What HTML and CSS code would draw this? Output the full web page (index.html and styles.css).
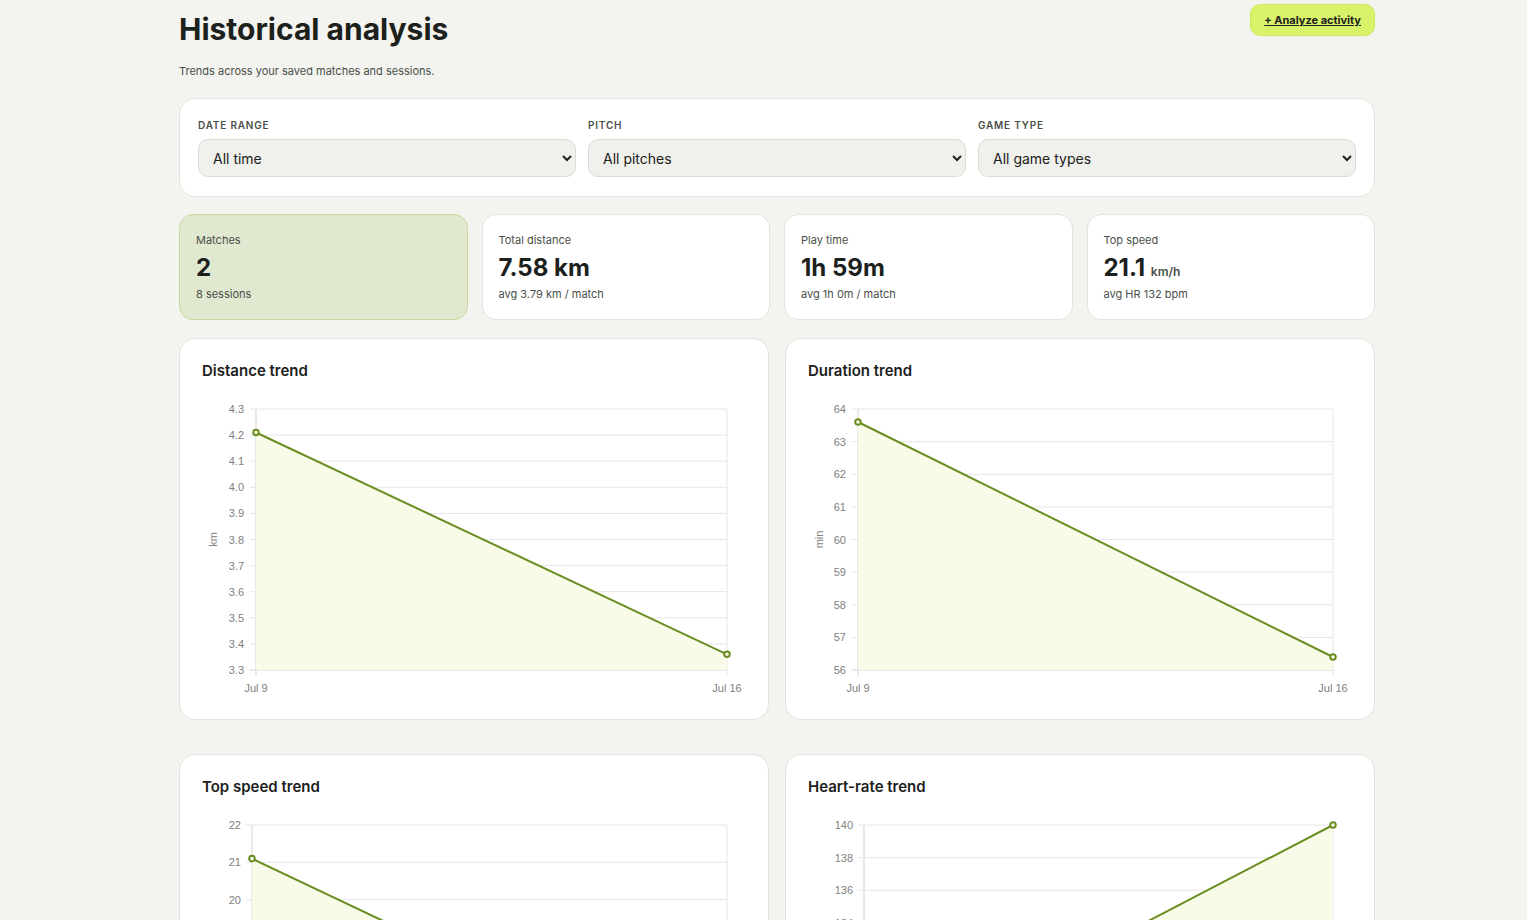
FILE: index.html
```html
<!DOCTYPE html>
<html lang="en">
<head>
  <meta charset="UTF-8">
  <meta name="viewport" content="width=device-width, initial-scale=1.0">
  <title>Historical analysis</title>
  <link rel="stylesheet" href="styles.css">
</head>
<body>

  <main class="page">
    <!-- Page header -->
    <div class="page-head">
      <div>
        <h1>Historical analysis</h1>
        <p class="subtitle">Trends across your saved matches and sessions.</p>
      </div>
      <a class="btn-primary" href="#">+ Analyze activity</a>
    </div>

    <!-- Filters -->
    <div class="card filters">
      <div class="field">
        <label>Date range</label>
        <select>
          <option>All time</option>
          <option>Last 30 days</option>
          <option>Last 90 days</option>
        </select>
      </div>
      <div class="field">
        <label>Pitch</label>
        <select>
          <option>All pitches</option>
        </select>
      </div>
      <div class="field">
        <label>Game type</label>
        <select>
          <option>All game types</option>
        </select>
      </div>
    </div>

    <!-- Summary stats -->
    <div class="stats">
      <div class="stat highlight">
        <div class="stat-label">Matches</div>
        <div class="stat-value">2</div>
        <div class="stat-sub">8 sessions</div>
      </div>
      <div class="stat">
        <div class="stat-label">Total distance</div>
        <div class="stat-value">7.58 km</div>
        <div class="stat-sub">avg 3.79 km / match</div>
      </div>
      <div class="stat">
        <div class="stat-label">Play time</div>
        <div class="stat-value">1h 59m</div>
        <div class="stat-sub">avg 1h 0m / match</div>
      </div>
      <div class="stat">
        <div class="stat-label">Top speed</div>
        <div class="stat-value">21.1 <span class="unit">km/h</span></div>
        <div class="stat-sub">avg HR 132 bpm</div>
      </div>
    </div>

    <!-- Trend charts -->
    <div class="charts">
      <div class="card chart-card">
        <h3>Distance trend</h3>
        <svg class="chart" width="546" height="310" viewBox="0 0 546 310">
          <g class="grid">
            <line x1="49" y1="14" x2="526" y2="14"/>
            <line x1="49" y1="40.1" x2="526" y2="40.1"/>
            <line x1="49" y1="66.2" x2="526" y2="66.2"/>
            <line x1="49" y1="92.3" x2="526" y2="92.3"/>
            <line x1="49" y1="118.4" x2="526" y2="118.4"/>
            <line x1="49" y1="144.5" x2="526" y2="144.5"/>
            <line x1="49" y1="170.6" x2="526" y2="170.6"/>
            <line x1="49" y1="196.7" x2="526" y2="196.7"/>
            <line x1="49" y1="222.8" x2="526" y2="222.8"/>
            <line x1="49" y1="248.9" x2="526" y2="248.9"/>
            <line x1="526" y1="14" x2="526" y2="281"/>
          </g>
          <g class="axis">
            <line x1="55" y1="14" x2="55" y2="281"/>
            <line x1="49" y1="275" x2="526" y2="275"/>
          </g>
          <g class="ticks" text-anchor="end">
            <text x="43" y="18">4.3</text>
            <text x="43" y="44.1">4.2</text>
            <text x="43" y="70.2">4.1</text>
            <text x="43" y="96.3">4.0</text>
            <text x="43" y="122.4">3.9</text>
            <text x="43" y="148.5">3.8</text>
            <text x="43" y="174.6">3.7</text>
            <text x="43" y="200.7">3.6</text>
            <text x="43" y="226.8">3.5</text>
            <text x="43" y="252.9">3.4</text>
            <text x="43" y="279">3.3</text>
          </g>
          <g class="ticks" text-anchor="middle">
            <text x="55" y="297">Jul 9</text>
            <text x="526" y="297">Jul 16</text>
          </g>
          <text class="unit-label" transform="translate(16 144.5) rotate(-90)" text-anchor="middle">km</text>
          <polygon class="area" points="55,37.5 526,259.3 526,275 55,275"/>
          <polyline class="line" points="55,37.5 526,259.3"/>
          <circle class="dot" cx="55" cy="37.5" r="2.8"/>
          <circle class="dot" cx="526" cy="259.3" r="2.8"/>
        </svg>
      </div>

      <div class="card chart-card">
        <h3>Duration trend</h3>
        <svg class="chart" width="546" height="310" viewBox="0 0 546 310">
          <g class="grid">
            <line x1="45" y1="14" x2="526" y2="14"/>
            <line x1="45" y1="46.6" x2="526" y2="46.6"/>
            <line x1="45" y1="79.3" x2="526" y2="79.3"/>
            <line x1="45" y1="111.9" x2="526" y2="111.9"/>
            <line x1="45" y1="144.5" x2="526" y2="144.5"/>
            <line x1="45" y1="177.1" x2="526" y2="177.1"/>
            <line x1="45" y1="209.8" x2="526" y2="209.8"/>
            <line x1="45" y1="242.4" x2="526" y2="242.4"/>
            <line x1="526" y1="14" x2="526" y2="281"/>
          </g>
          <g class="axis">
            <line x1="51" y1="14" x2="51" y2="281"/>
            <line x1="45" y1="275" x2="526" y2="275"/>
          </g>
          <g class="ticks" text-anchor="end">
            <text x="39" y="18">64</text>
            <text x="39" y="50.6">63</text>
            <text x="39" y="83.3">62</text>
            <text x="39" y="115.9">61</text>
            <text x="39" y="148.5">60</text>
            <text x="39" y="181.1">59</text>
            <text x="39" y="213.8">58</text>
            <text x="39" y="246.4">57</text>
            <text x="39" y="279">56</text>
          </g>
          <g class="ticks" text-anchor="middle">
            <text x="51" y="297">Jul 9</text>
            <text x="526" y="297">Jul 16</text>
          </g>
          <text class="unit-label" transform="translate(16 144.5) rotate(-90)" text-anchor="middle">min</text>
          <polygon class="area" points="51,27 526,262 526,275 51,275"/>
          <polyline class="line" points="51,27 526,262"/>
          <circle class="dot" cx="51" cy="27" r="2.8"/>
          <circle class="dot" cx="526" cy="262" r="2.8"/>
        </svg>
      </div>

      <div class="card chart-card">
        <h3>Top speed trend</h3>
        <svg class="chart" width="546" height="310" viewBox="0 0 546 310">
          <g class="grid">
            <line x1="45" y1="14" x2="526" y2="14"/>
            <line x1="45" y1="51.3" x2="526" y2="51.3"/>
            <line x1="45" y1="88.6" x2="526" y2="88.6"/>
            <line x1="45" y1="125.9" x2="526" y2="125.9"/>
            <line x1="45" y1="163.1" x2="526" y2="163.1"/>
            <line x1="45" y1="200.4" x2="526" y2="200.4"/>
            <line x1="45" y1="237.7" x2="526" y2="237.7"/>
            <line x1="526" y1="14" x2="526" y2="281"/>
          </g>
          <g class="axis">
            <line x1="51" y1="14" x2="51" y2="281"/>
            <line x1="45" y1="275" x2="526" y2="275"/>
          </g>
          <g class="ticks" text-anchor="end">
            <text x="40" y="18">22</text>
            <text x="40" y="55.3">21</text>
            <text x="40" y="92.6">20</text>
            <text x="40" y="129.9">19</text>
            <text x="40" y="167.1">18</text>
            <text x="40" y="204.4">17</text>
            <text x="40" y="241.7">16</text>
            <text x="40" y="279">15</text>
          </g>
          <g class="ticks" text-anchor="middle">
            <text x="51" y="297">Jul 9</text>
            <text x="526" y="297">Jul 16</text>
          </g>
          <text class="unit-label" transform="translate(16 144.5) rotate(-90)" text-anchor="middle">km/h</text>
          <polygon class="area" points="51,47.6 526,273 526,275 51,275"/>
          <polyline class="line" points="51,47.6 526,273"/>
          <circle class="dot" cx="51" cy="47.6" r="2.8"/>
          <circle class="dot" cx="526" cy="273" r="2.8"/>
        </svg>
      </div>

      <div class="card chart-card">
        <h3>Heart-rate trend</h3>
        <svg class="chart" width="546" height="310" viewBox="0 0 546 310">
          <g class="grid">
            <line x1="51" y1="14" x2="526" y2="14"/>
            <line x1="51" y1="46.6" x2="526" y2="46.6"/>
            <line x1="51" y1="79.3" x2="526" y2="79.3"/>
            <line x1="51" y1="111.9" x2="526" y2="111.9"/>
            <line x1="51" y1="144.5" x2="526" y2="144.5"/>
            <line x1="51" y1="177.1" x2="526" y2="177.1"/>
            <line x1="51" y1="209.8" x2="526" y2="209.8"/>
            <line x1="51" y1="242.4" x2="526" y2="242.4"/>
            <line x1="526" y1="14" x2="526" y2="281"/>
          </g>
          <g class="axis">
            <line x1="57" y1="14" x2="57" y2="281"/>
            <line x1="51" y1="275" x2="526" y2="275"/>
          </g>
          <g class="ticks" text-anchor="end">
            <text x="46" y="18">140</text>
            <text x="46" y="50.6">138</text>
            <text x="46" y="83.3">136</text>
            <text x="46" y="115.9">134</text>
            <text x="46" y="148.5">132</text>
            <text x="46" y="181.1">130</text>
            <text x="46" y="213.8">128</text>
            <text x="46" y="246.4">126</text>
            <text x="46" y="279">124</text>
          </g>
          <g class="ticks" text-anchor="middle">
            <text x="57" y="297">Jul 9</text>
            <text x="526" y="297">Jul 16</text>
          </g>
          <text class="unit-label" transform="translate(16 144.5) rotate(-90)" text-anchor="middle">bpm</text>
          <polygon class="area" points="57,258 526,14 526,275 57,275"/>
          <polyline class="line" points="57,258 526,14"/>
          <circle class="dot" cx="57" cy="258" r="2.8"/>
          <circle class="dot" cx="526" cy="14" r="2.8"/>
        </svg>
      </div>
    </div>
  </main>

</body>
</html>
```

FILE: styles.css
```css
/* Base */
body, html {
  margin: 0;
  padding: 0;
  font-family: Inter, "Noto Sans", sans-serif;
  background-color: #f3f3ef;
  color: #1c211c;
}

.page {
  width: 1196px;
  margin: 0 0 0 179px;
  padding-bottom: 40px;
}

/* Header */
.page-head {
  display: flex;
  justify-content: space-between;
  align-items: flex-start;
}
.page-head h1 {
  margin: 11px 0 0;
  font-size: 30px;
  font-weight: 700;
  letter-spacing: 0;
  line-height: 36px;
}
.subtitle {
  margin: 17px 0 0;
  font-size: 11px;
  color: #4a4f4a;
}
.btn-primary {
  margin-top: 4px;
  height: 32px;
  padding: 0 13px;
  display: flex;
  align-items: center;
  background-color: #d8f26a;
  border: 1px solid #cfe95f;
  border-radius: 10px;
  color: #1c211c;
  font-size: 11px;
  font-weight: 700;
  text-decoration: underline;
  box-sizing: border-box;
}

/* Cards */
.card {
  background-color: #fff;
  border: 1px solid #e4e4de;
  border-radius: 16px;
  box-sizing: border-box;
}

/* Filters */
.filters {
  margin-top: 20px;
  padding: 20px 18px 19px;
  display: grid;
  grid-template-columns: repeat(3, 1fr);
  gap: 12px;
}
.field label {
  display: block;
  font-size: 10px;
  font-weight: 600;
  letter-spacing: 0.8px;
  text-transform: uppercase;
  color: #4a4f4a;
  margin-bottom: 8px;
}
.field select {
  width: 100%;
  height: 38px;
  padding: 0 10px;
  font-family: inherit;
  font-size: 14px;
  color: #1c211c;
  background-color: #f0f0ec;
  border: 1px solid #dcdcd6;
  border-radius: 10px;
  outline: none;
}

/* Stats */
.stats {
  margin-top: 17px;
  display: grid;
  grid-template-columns: repeat(4, 1fr);
  gap: 14px;
}
.stat {
  height: 106px;
  padding: 18px 16px 0;
  background-color: #fff;
  border: 1px solid #e4e4de;
  border-radius: 14px;
  box-sizing: border-box;
}
.stat.highlight {
  background-color: #e1e8d0;
  border-color: #c9d89e;
}
.stat-label {
  font-size: 11px;
  color: #4a4f4a;
}
.stat-value {
  margin-top: 6px;
  font-size: 24px;
  font-weight: 700;
  line-height: 30px;
  color: #1c211c;
}
.stat-value .unit {
  font-size: 12px;
  font-weight: 600;
  line-height: 1;
  color: #4a4f4a;
}
.stat-sub {
  margin-top: 4px;
  font-size: 11px;
  color: #4a4f4a;
}

/* Charts */
.charts {
  margin-top: 18px;
  display: grid;
  grid-template-columns: repeat(2, 1fr);
  column-gap: 16px;
  row-gap: 34px;
}
.chart-card {
  padding: 22px 21px 14px;
}
.chart-card h3 {
  margin: 0 0 14px 1px;
  font-size: 15px;
  font-weight: 600;
  line-height: 20px;
}
.chart {
  display: block;
}
.chart .grid line {
  stroke: #e6e6e6;
  stroke-width: 1;
}
.chart .axis line {
  stroke: #d2d2d2;
  stroke-width: 1;
}
.chart .ticks text,
.chart .unit-label {
  font-family: "Liberation Sans", Arial, sans-serif;
  font-size: 11px;
  fill: #808080;
}
.chart .area {
  fill: #f7fbe8;
}
.chart .line {
  fill: none;
  stroke: #6b8e23;
  stroke-width: 2;
}
.chart .dot {
  fill: #f7fbe8;
  stroke: #6b8e23;
  stroke-width: 2;
}
```
